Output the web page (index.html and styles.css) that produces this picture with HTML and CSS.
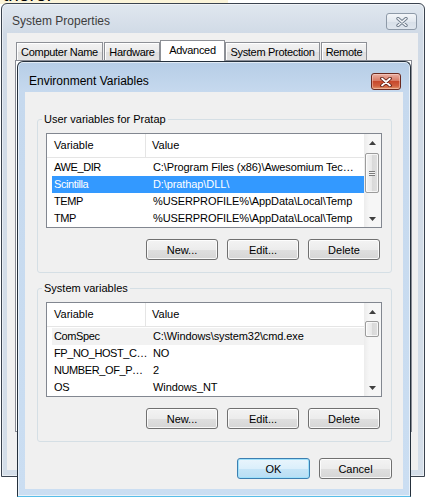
FILE: index.html
```html
<!DOCTYPE html>
<html lang="en">
<head>
    <meta charset="UTF-8">
    <meta name="viewport" content="width=device-width, initial-scale=1.0">
    <title>Environment Variables</title>
    <link rel="stylesheet" href="styles.css">
</head>
<body>

<div class="desktop">
    <div class="page-strip"><span>there.</span></div>

    <!-- parent dialog, inactive -->
    <div class="window window-sys">
        <div class="titlebar">
            <span class="title">System Properties</span>
            <span class="close-btn close-inactive">
                <svg width="12" height="10" viewBox="0 0 12 10">
                    <path d="M2 1.5 L10 8.5 M10 1.5 L2 8.5" stroke="#6f7c8b" stroke-width="3.4" stroke-linecap="round"/>
                    <path d="M2 1.5 L10 8.5 M10 1.5 L2 8.5" stroke="#f4f6f9" stroke-width="1.6" stroke-linecap="round"/>
                </svg>
            </span>
        </div>
        <div class="client client-sys">
            <div class="tabs">
                <div class="tab tab-cn">Computer Name</div>
                <div class="tab tab-hw">Hardware</div>
                <div class="tab tab-adv active">Advanced</div>
                <div class="tab tab-sp">System Protection</div>
                <div class="tab tab-rm">Remote</div>
            </div>
            <div class="tab-panel"></div>
        </div>
    </div>

    <!-- child dialog, active -->
    <div class="window window-env">
        <div class="titlebar">
            <span class="title">Environment Variables</span>
            <span class="close-btn close-active">
                <svg width="12" height="10" viewBox="0 0 12 10">
                    <path d="M2 1.5 L10 8.5 M10 1.5 L2 8.5" stroke="#5a1a10" stroke-width="3.6" stroke-linecap="round"/>
                    <path d="M2 1.5 L10 8.5 M10 1.5 L2 8.5" stroke="#ffffff" stroke-width="1.8" stroke-linecap="round"/>
                </svg>
            </span>
        </div>
        <div class="client client-env">

            <fieldset class="group">
                <legend>User variables for Pratap</legend>
                <div class="listview">
                    <div class="lv-main">
                        <div class="lv-header">
                            <div class="col col-name">Variable</div>
                            <div class="col col-value">Value</div>
                        </div>
                        <div class="lv-rows">
                            <div class="lv-row">
                                <div class="col col-name">AWE_DIR</div>
                                <div class="col col-value">C:\Program Files (x86)\Awesomium Tec…</div>
                            </div>
                            <div class="lv-row selected">
                                <div class="col col-name">Scintilla</div>
                                <div class="col col-value">D:\prathap\DLL\</div>
                            </div>
                            <div class="lv-row">
                                <div class="col col-name">TEMP</div>
                                <div class="col col-value">%USERPROFILE%\AppData\Local\Temp</div>
                            </div>
                            <div class="lv-row">
                                <div class="col col-name">TMP</div>
                                <div class="col col-value">%USERPROFILE%\AppData\Local\Temp</div>
                            </div>
                        </div>
                    </div>
                    <div class="scrollbar">
                        <div class="sb-arrow"><svg width="7" height="4" viewBox="0 0 7 4"><polygon points="0,4 3.5,0 7,4" fill="#3f3f3f"/></svg></div>
                        <div class="sb-track">
                            <div class="sb-thumb" style="margin-top: 2px; height: 40px;"><span class="grip"></span></div>
                        </div>
                        <div class="sb-arrow"><svg width="7" height="4" viewBox="0 0 7 4"><polygon points="0,0 7,0 3.5,4" fill="#3f3f3f"/></svg></div>
                    </div>
                </div>
                <div class="btn-row">
                    <button class="btn">New...</button>
                    <button class="btn">Edit...</button>
                    <button class="btn">Delete</button>
                </div>
            </fieldset>

            <fieldset class="group">
                <legend>System variables</legend>
                <div class="listview">
                    <div class="lv-main">
                        <div class="lv-header">
                            <div class="col col-name">Variable</div>
                            <div class="col col-value">Value</div>
                        </div>
                        <div class="lv-rows">
                            <div class="lv-row hot">
                                <div class="col col-name">ComSpec</div>
                                <div class="col col-value">C:\Windows\system32\cmd.exe</div>
                            </div>
                            <div class="lv-row">
                                <div class="col col-name">FP_NO_HOST_C…</div>
                                <div class="col col-value">NO</div>
                            </div>
                            <div class="lv-row">
                                <div class="col col-name">NUMBER_OF_P…</div>
                                <div class="col col-value">2</div>
                            </div>
                            <div class="lv-row">
                                <div class="col col-name">OS</div>
                                <div class="col col-value">Windows_NT</div>
                            </div>
                        </div>
                    </div>
                    <div class="scrollbar">
                        <div class="sb-arrow"><svg width="7" height="4" viewBox="0 0 7 4"><polygon points="0,4 3.5,0 7,4" fill="#3f3f3f"/></svg></div>
                        <div class="sb-track">
                            <div class="sb-thumb" style="margin-top: 1px; height: 16px;"></div>
                        </div>
                        <div class="sb-arrow"><svg width="7" height="4" viewBox="0 0 7 4"><polygon points="0,0 7,0 3.5,4" fill="#3f3f3f"/></svg></div>
                    </div>
                </div>
                <div class="btn-row">
                    <button class="btn">New...</button>
                    <button class="btn">Edit...</button>
                    <button class="btn">Delete</button>
                </div>
            </fieldset>

            <div class="dialog-buttons">
                <button class="btn btn-wide btn-default">OK</button>
                <button class="btn btn-wide">Cancel</button>
            </div>
        </div>
    </div>
</div>

</body>
</html>
```

FILE: styles.css
```css
* {
    box-sizing: border-box;
}
body {
    margin: 0;
    font-family: "Liberation Sans", Arial, sans-serif;
    font-size: 11px;
    color: #000;
    background-color: #fff;
}
.desktop {
    position: relative;
    width: 427px;
    height: 497px;
    overflow: hidden;
    background-color: #fff;
}

/* bit of the web page showing above the dialogs */
.page-strip {
    width: 228px;
    height: 4px;
    overflow: hidden;
    background-color: #fbf4d9;
}
.page-strip span {
    display: block;
    margin: -15px 0 0 3px;
    font-family: "Liberation Sans", Arial, sans-serif;
    font-size: 19px;
    line-height: 19px;
}

/* window frames */
.window {
    position: absolute;
    display: flex;
    flex-direction: column;
    border: 1px solid #3a434f;
    border-radius: 6px 6px 0 0;
}
.window-sys {
    left: 1px;
    top: 3px;
    width: 424px;
    height: 474px;
    background: linear-gradient(#e0e7ef, #d0dae6 30px, #d4dee9);
    box-shadow: inset 0 0 0 1px rgba(255, 255, 255, 0.5);
}
.window-env {
    left: 17px;
    top: 61px;
    width: 394px;
    height: 436px;
    border-color: #25303c;
    border-bottom-color: #58bde8;
    background: linear-gradient(#b6cde6, #c6d9ee 30px, #cbdef2);
    box-shadow: inset 0 0 0 1px rgba(255, 255, 255, 0.6);
}
.titlebar {
    display: flex;
    align-items: flex-start;
    flex-shrink: 0;
}
.window-sys .titlebar {
    height: 29px;
    padding: 9px 7px 0 10px;
}
.window-env .titlebar {
    height: 30px;
    padding: 11px 9px 0 11px;
}
.title {
    flex: 1;
    font-size: 12px;
    line-height: 17px;
}
.window-sys .title {
    color: #3d3d3d;
}

.close-btn {
    display: flex;
    align-items: center;
    justify-content: center;
    height: 17px;
    border-radius: 3px;
}
.close-inactive {
    width: 31px;
    border: 1px solid #8e9aa8;
    background: linear-gradient(#f3f6f9, #e2e8ef 50%, #d7dfe8 51%, #dfe6ee);
}
.close-active {
    width: 30px;
    border: 1px solid #6b2a1f;
    background: linear-gradient(#eab0a3, #d87a64 45%, #c7492c 50%, #d0603f 80%, #e29a6f);
    box-shadow: inset 0 0 0 1px rgba(255, 220, 210, 0.45);
}

/* client areas */
.client {
    background-color: #f0f0f0;
    flex-shrink: 0;
}
.client-sys {
    margin: 0 6px 0 5px;
    height: 437px;
}
.client-env {
    margin: 0 7px;
    height: 397px;
    display: flex;
    flex-direction: column;
}

/* tabs of the parent dialog */
.tabs {
    display: flex;
    align-items: flex-end;
    height: 27px;
    padding-left: 9px;
}
.tab {
    position: relative;
    display: flex;
    align-items: center;
    justify-content: center;
    height: 18px;
    border: 1px solid #8d9096;
    border-bottom: none;
    background: linear-gradient(#f3f3f3, #ebebeb 50%, #dedede 51%, #e4e4e4);
    box-shadow: inset 1px 1px 0 #fff;
    letter-spacing: -0.3px;
}
.tab.active {
    height: 21px;
    margin-bottom: -1px;
    padding-bottom: 2px;
    background: #fff;
    z-index: 1;
}
.tab-cn { width: 87px; margin-right: 1px; }
.tab-hw { width: 56px; }
.tab-adv { width: 65px; }
.tab-sp { width: 95px; margin-right: 1px; }
.tab-rm { width: 46px; }
.tab-panel {
    margin: 0 6px 0 8px;
    height: 372px;
    border: 1px solid #898c95;
    background-color: #fff;
}

/* group boxes */
.group {
    margin: 20px 11px 0 12px;
    padding: 7px 9px 12px 8px;
    border: 1px solid #d5dfe5;
    border-radius: 3px;
    min-width: 0;
}
.group + .group {
    margin-top: 8px;
}
.group legend {
    margin-left: -4px;
    padding: 0 2px;
    line-height: 14px;
}

/* list views */
.listview {
    display: flex;
    height: 95px;
    border: 1px solid #828790;
    background-color: #fff;
}
.lv-main {
    flex: 1;
    min-width: 0;
}
.lv-header {
    display: flex;
    height: 24px;
    border-bottom: 1px solid #e5e5e5;
}
.lv-header .col {
    line-height: 23px;
}
.lv-header .col-name {
    width: 99px;
    padding-left: 7px;
    border-right: 1px solid #e5e5e5;
}
.lv-header .col-value {
    padding-left: 6px;
}
.lv-rows {
    padding: 1px 0 0 5px;
}
.lv-row {
    display: flex;
    height: 17px;
    line-height: 17px;
}
.lv-row .col-name {
    width: 99px;
    padding-left: 2px;
    white-space: nowrap;
    overflow: hidden;
    letter-spacing: -0.4px;
}
.lv-row .col-value {
    flex: 1;
    min-width: 0;
    padding-left: 2px;
    white-space: nowrap;
    overflow: hidden;
    letter-spacing: -0.1px;
}
.lv-row.selected {
    background-color: #3399ff;
    color: #fff;
}
.lv-row.hot {
    background-color: #f2f2f2;
}

/* scroll bars */
.scrollbar {
    display: flex;
    flex-direction: column;
    width: 17px;
    background: linear-gradient(to right, #ececec, #f6f6f6 30%, #f6f6f6);
}
.sb-arrow {
    display: flex;
    align-items: center;
    justify-content: center;
    height: 17px;
    flex-shrink: 0;
}
.sb-track {
    flex: 1;
}
.sb-thumb {
    display: flex;
    align-items: center;
    justify-content: center;
    margin-left: 1px;
    margin-right: 2px;
    border: 1px solid #9c9c9c;
    border-radius: 2px;
    background: linear-gradient(to right, #f4f4f4, #e8e8e8 50%, #d9d9d9 51%, #e0e0e0);
    box-shadow: inset 0 0 0 1px rgba(255, 255, 255, 0.7);
}
.grip {
    width: 6px;
    height: 5px;
    background: repeating-linear-gradient(#7c7c7c 0, #7c7c7c 1px, #f4f4f4 1px, #f4f4f4 2px);
}

/* push buttons */
.btn-row {
    display: flex;
    justify-content: flex-end;
    gap: 9px;
    margin-top: 11px;
    padding-right: 2px;
}
.btn {
    width: 72px;
    height: 21px;
    padding: 0;
    border: 1px solid #707070;
    border-radius: 3px;
    background: linear-gradient(#f3f3f3, #ececec 50%, #dfdfdf 51%, #d6d6d6);
    box-shadow: inset 0 0 0 1px rgba(255, 255, 255, 0.8);
    font-family: inherit;
    font-size: 11px;
    color: #000;
}
.btn-wide {
    width: 73px;
}
.btn-default {
    border-color: #3c7fb1;
    background: linear-gradient(#e9f5fc, #dbeffb 50%, #c6e5f7 51%, #b9def4);
    box-shadow: inset 0 0 0 1px #9fe1fb;
}
.dialog-buttons {
    display: flex;
    justify-content: flex-end;
    gap: 9px;
    margin: 16px 11px 0 0;
}
```
